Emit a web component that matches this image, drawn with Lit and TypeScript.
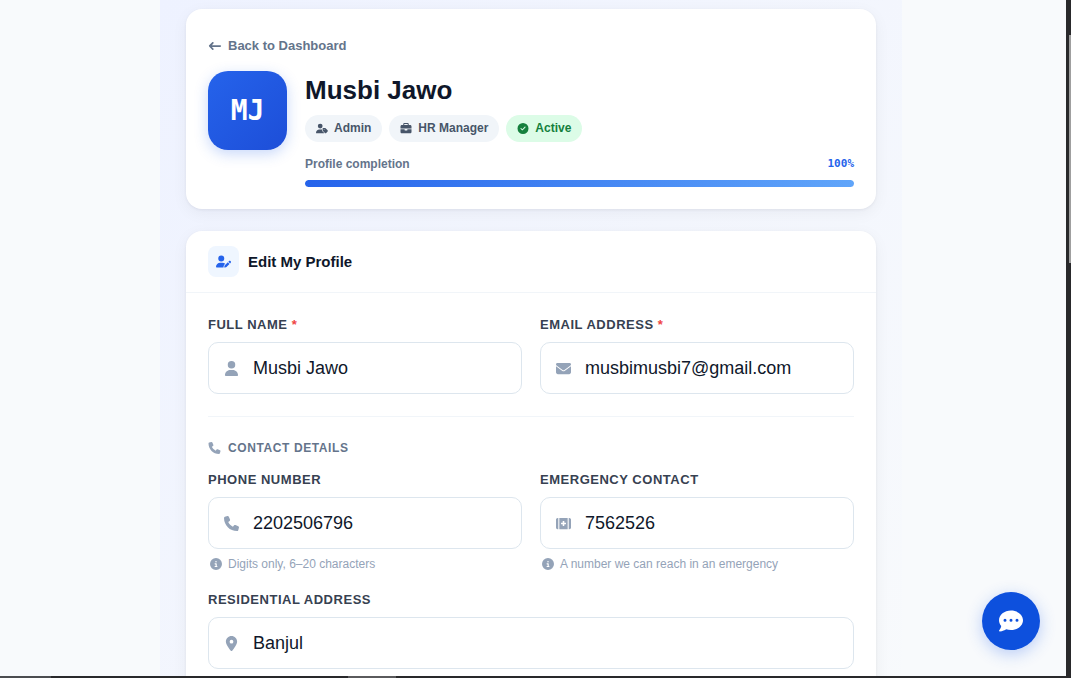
import { LitElement, html, css, svg } from "lit";
import { customElement, property } from "lit/decorators.js";

type Icon = { box: string; d: string };

const circle = "M256 512A256 256 0 1 0 256 0a256 256 0 1 0 0 512z";
const person = "M224 256A128 128 0 1 0 224 0a128 128 0 1 0 0 256zm-45.7 48C79.8 304 0 383.8 0 482.3C0 498.7 13.3 512 29.7 512";

const icons: Record<string, Icon> = {
  back: {
    box: "0 0 448 512",
    d: "M9 233c-12 12-12 33 0 45l112 112c12 12 33 12 45 0s12-33 0-45L109 288H416c18 0 32-14 32-32s-14-32-32-32H109L166 167c12-12 12-33 0-45s-33-12-45 0z",
  },
  user: {
    box: "0 0 448 512",
    d: person + "H418.3c16.4 0 29.7-13.3 29.7-29.7C448 383.8 368.2 304 269.7 304H178.3z",
  },
  userTag: {
    box: "0 0 640 512",
    d: person + "H418.3c10 0 18.8-4.9 24.2-12.5l-99.2-99.2c-14.9-14.9-23.3-35.1-23.3-56.1v-33c-15.9-4.7-32.8-7.2-50.3-7.2H178.3zM384 224c-17.7 0-32 14.3-32 32v82.7c0 17 6.7 33.3 18.7 45.3L478.1 491.3c18.7 18.7 49.1 18.7 67.9 0l73.4-73.4c18.7-18.7 18.7-49.1 0-67.9L512 242.7c-12-12-28.3-18.7-45.3-18.7H384zm24 80a24 24 0 1 1 48 0 24 24 0 1 1 -48 0z",
  },
  userPen: {
    box: "0 0 640 512",
    d: person + "H322.8c-3.1-8.8-3.7-18.4-1.4-27.8l15-60.1c2.8-11.3 8.6-21.5 16.8-29.7l40.3-40.3c-32.1-31-75.7-50.1-123.9-50.1H178.3zm435.5-68.3c-15.6-15.6-40.9-15.6-56.6 0l-29.4 29.4 71 71 29.4-29.4c15.6-15.6 15.6-40.9 0-56.6l-14.4-14.4zM375.9 417c-4.1 4.1-7 9.2-8.4 14.9l-15 60.1c-1.4 5.5 .2 11.2 4.2 15.2s9.7 5.6 15.2 4.2l60.1-15c5.6-1.4 10.8-4.3 14.9-8.4L576.1 358.7l-71-71L375.9 417z",
  },
  briefcase: {
    box: "0 0 512 512",
    d: "M184 48H328c4.4 0 8 3.6 8 8V96H176V56c0-4.4 3.6-8 8-8zm-56 8V96H64C28.7 96 0 124.7 0 160v96H192 320 512V160c0-35.3-28.7-64-64-64H384V56c0-30.9-25.1-56-56-56H184c-30.9 0-56 25.1-56 56zM512 288H320v32c0 17.7-14.3 32-32 32H224c-17.7 0-32-14.3-32-32V288H0V416c0 35.3 28.7 64 64 64H448c35.3 0 64-28.7 64-64V288z",
  },
  check: {
    box: "0 0 512 512",
    d: circle + "M369 209L241 337c-9.4 9.4-24.6 9.4-33.9 0l-64-64c-9.4-9.4-9.4-24.6 0-33.9s24.6-9.4 33.9 0l47 47L335 175c9.4-9.4 24.6-9.4 33.9 0s9.4 24.6 0 33.9z",
  },
  info: {
    box: "0 0 512 512",
    d: circle + "M216 336h24V272H216c-13.3 0-24-10.7-24-24s10.7-24 24-24h48c13.3 0 24 10.7 24 24v88h8c13.3 0 24 10.7 24 24s-10.7 24-24 24H216c-13.3 0-24-10.7-24-24s10.7-24 24-24zm40-208a32 32 0 1 1 0 64 32 32 0 1 1 0-64z",
  },
  envelope: {
    box: "0 0 512 512",
    d: "M48 64C21.5 64 0 85.5 0 112c0 15.1 7.1 29.3 19.2 38.4L236.8 313.6c11.4 8.5 27 8.5 38.4 0L492.8 150.4c12.1-9.1 19.2-23.3 19.2-38.4c0-26.5-21.5-48-48-48H48zM0 176V384c0 35.3 28.7 64 64 64H448c35.3 0 64-28.7 64-64V176L294.4 339.2c-22.8 17.1-54 17.1-76.8 0L0 176z",
  },
  phone: {
    box: "0 0 512 512",
    d: "M164.9 24.6c-7.7-18.6-28-28.5-47.4-23.2l-88 24C12.1 30.2 0 46 0 64C0 311.4 200.6 512 448 512c18 0 33.8-12.1 38.6-29.5l24-88c5.3-19.4-4.6-39.7-23.2-47.4l-96-40c-16.3-6.8-35.2-2.1-46.3 11.6L304.7 368C234.3 334.7 177.3 277.7 144 207.3L193.3 167c13.7-11.2 18.4-30 11.6-46.3l-40-96z",
  },
  medical: {
    box: "0 0 576 512",
    d: "M64 40h24v432H64c-35.3 0-64-28.7-64-64V104c0-35.3 28.7-64 64-64zM128 40H448V472H128zM512 40h-24v432h24c35.3 0 64-28.7 64-64V104c0-35.3-28.7-64-64-64zM256 176v48H208c-8.8 0-16 7.2-16 16v32c0 8.8 7.2 16 16 16h48v48c0 8.8 7.2 16 16 16h32c8.8 0 16-7.2 16-16V288h48c8.8 0 16-7.2 16-16V240c0-8.8-7.2-16-16-16H320V176c0-8.8-7.2-16-16-16H272c-8.8 0-16 7.2-16 16z",
  },
  pin: {
    box: "0 0 384 512",
    d: "M215.7 499.2C267 435 384 279.4 384 192C384 86 298 0 192 0S0 86 0 192c0 87.4 117 243 168.3 307.2c12.3 15.3 35.1 15.3 47.4 0zM192 128a64 64 0 1 1 0 128 64 64 0 1 1 0-128z",
  },
  chat: {
    box: "0 0 512 512",
    d: "M256 448c141.4 0 256-93.1 256-208S397.4 32 256 32S0 125.1 0 240c0 45.1 17.7 86.8 47.7 120.9c-1.9 24.5-11.4 46.3-21.4 62.9c-5.5 9.2-11.1 16.6-15.2 21.6c-2.1 2.5-3.7 4.4-4.9 5.7l-1.6 1.7c-4.6 4.6-5.9 11.4-3.4 17.4c2.5 6 8.3 9.9 14.8 9.9c28.7 0 57.6-8.9 81.6-19.3c22.9-10 42.4-21.9 54.3-30.6c31.8 11.5 67 17.9 104.1 17.9zM128 208a32 32 0 1 1 0 64 32 32 0 1 1 0-64zm128 0a32 32 0 1 1 0 64 32 32 0 1 1 0-64zm128 0a32 32 0 1 1 0 64 32 32 0 1 1 0-64z",
  },
};

@customElement("ui-icon")
class UiIcon extends LitElement {
  @property() name = "user";

  static styles = css`
    :host {
      display: inline-flex;
      flex: none;
      width: 1em;
      height: 1em;
    }
    .glyph {
      width: 100%;
      height: 100%;
      fill: currentColor;
      fill-rule: evenodd;
    }
  `;

  render() {
    const icon = icons[this.name];
    return html`<svg class="glyph" viewBox=${icon.box} aria-hidden="true">
      ${svg`<path d=${icon.d}></path>`}
    </svg>`;
  }
}

@customElement("profile-field")
class ProfileField extends LitElement {
  @property() label = "";
  @property() icon = "user";
  @property() type = "text";
  @property() value = "";
  @property() hint = "";
  @property({ type: Boolean }) required = false;

  static styles = css`
    :host {
      display: block;
      min-width: 0;
    }
    .label {
      display: block;
      margin-bottom: 8px;
      font-size: 13px;
      line-height: 18px;
      font-weight: 700;
      letter-spacing: 0.04em;
      text-transform: uppercase;
      color: #374151;
    }
    .star {
      color: #ef4444;
    }
    .box {
      display: flex;
      align-items: center;
      gap: 14px;
      height: 52px;
      box-sizing: border-box;
      padding: 0 15px;
      border: 1px solid #dde6ee;
      border-radius: 10px;
      background: #fff;
    }
    .mark {
      font-size: 15px;
      color: #94a3b8;
    }
    .input {
      flex: 1;
      min-width: 0;
      height: 100%;
      padding: 0;
      border: 0;
      outline: 0;
      background: none;
      font: 18px "Liberation Sans", Arial, sans-serif;
      color: #0f172a;
    }
    .hint {
      display: flex;
      align-items: center;
      gap: 6px;
      margin: 7px 0 0;
      padding-left: 2px;
      font-size: 12px;
      line-height: 16px;
      color: #94a3b8;
    }
  `;

  render() {
    return html`
      <label class="label" for="field"
        >${this.label}${this.required ? html` <span class="star">*</span>` : ""}</label
      >
      <div class="box">
        <ui-icon class="mark" name=${this.icon}></ui-icon>
        <input
          class="input"
          id="field"
          type=${this.type}
          .value=${this.value}
          ?required=${this.required}
        />
      </div>
      ${this.hint
        ? html`<p class="hint"><ui-icon name="info"></ui-icon>${this.hint}</p>`
        : ""}
    `;
  }
}

@customElement("app-root")
class AppRoot extends LitElement {
  @property({ type: Number }) completion = 100;

  static styles = css`
    :host {
      display: grid;
      grid-template: minmax(0, 1fr) 2px / minmax(0, 1fr) 5px;
      height: 100vh;
      overflow: hidden;
      position: relative;
      background: #f8fafc;
      font-family: "Liberation Sans", Arial, sans-serif;
      color: #0f172a;
    }
    .view {
      overflow: hidden;
    }
    .page {
      display: flex;
      flex-direction: column;
      gap: 22px;
      margin: 0 164px 0 160px;
      padding: 9px 26px 26px;
      background: linear-gradient(135deg, #eef2ff 0%, #f8fafc 100%);
    }
    .card {
      border-radius: 16px;
      background: #fff;
      box-shadow: 0 1px 3px rgba(15, 23, 42, 0.06), 0 4px 16px rgba(15, 23, 42, 0.05);
    }
    .summary {
      padding: 22px;
    }
    .back {
      display: flex;
      width: fit-content;
      align-items: center;
      gap: 6px;
      margin-bottom: 10px;
      font-size: 13px;
      line-height: 30px;
      font-weight: 700;
      color: #64748b;
      text-decoration: none;
    }
    .back ui-icon {
      font-size: 14px;
    }
    .identity {
      display: flex;
      gap: 18px;
    }
    .avatar {
      display: grid;
      place-items: center;
      flex: none;
      width: 79px;
      height: 79px;
      border-radius: 20px;
      background: linear-gradient(135deg, #2563eb, #1d4ed8);
      box-shadow: 0 4px 14px rgba(37, 99, 235, 0.25);
      font: 700 28px "DejaVu Sans Mono", monospace;
      color: #fff;
    }
    .details {
      flex: 1;
      min-width: 0;
    }
    .name {
      margin: 0 0 6px;
      font-size: 26px;
      line-height: 38px;
      font-weight: 700;
    }
    .chips {
      display: flex;
      flex-wrap: wrap;
      gap: 7px;
      margin-bottom: 14px;
    }
    .chip {
      display: flex;
      align-items: center;
      gap: 6px;
      padding: 0 11px;
      border-radius: 14px;
      background: #f1f5f9;
      font-size: 12px;
      line-height: 27px;
      font-weight: 700;
      color: #475569;
    }
    .chip ui-icon {
      width: 12px;
      height: 11px;
    }
    .chip-active {
      background: #dcfce7;
      color: #15803d;
    }
    .progress-head {
      display: flex;
      justify-content: space-between;
      margin-bottom: 8px;
      font-size: 12px;
      line-height: 16px;
      font-weight: 700;
      color: #64748b;
    }
    .percent {
      font-family: "DejaVu Sans Mono", monospace;
      font-size: 11px;
      color: #2563eb;
    }
    .track {
      height: 7px;
      border-radius: 4px;
      overflow: hidden;
      background: #e2e8f0;
    }
    .fill {
      height: 100%;
      border-radius: 4px;
      background: linear-gradient(90deg, #2563eb, #60a5fa);
    }
    .form-head {
      display: flex;
      align-items: center;
      gap: 9px;
      padding: 15px 22px;
      border-bottom: 1px solid #f1f5f9;
    }
    .badge {
      display: grid;
      place-items: center;
      width: 31px;
      height: 31px;
      border-radius: 8px;
      background: #eff6ff;
      font-size: 15px;
      color: #2563eb;
    }
    .title {
      margin: 0;
      font-size: 15px;
      line-height: 20px;
      font-weight: 700;
    }
    .form {
      padding: 23px 22px;
    }
    .grid {
      display: grid;
      grid-template-columns: repeat(2, minmax(0, 1fr));
      gap: 19px 18px;
    }
    .wide {
      grid-column: 1 / -1;
    }
    .section {
      display: flex;
      align-items: center;
      gap: 7px;
      margin: 22px 0 15px;
      padding-top: 23px;
      border-top: 1px solid #f1f5f9;
      font-size: 12px;
      line-height: 16px;
      font-weight: 700;
      letter-spacing: 0.05em;
      text-transform: uppercase;
      color: #64748b;
    }
    .section ui-icon {
      width: 13px;
      color: #94a3b8;
    }
    .chat {
      position: absolute;
      right: 31px;
      bottom: 28px;
      display: grid;
      place-items: center;
      width: 58px;
      height: 58px;
      padding: 0;
      border: 0;
      border-radius: 50%;
      background: #0d50dd;
      box-shadow: 0 4px 16px rgba(37, 99, 235, 0.3);
      font-size: 24px;
      color: #fff;
    }
    .rail {
      display: flex;
      flex-direction: column;
      align-items: flex-end;
      padding-top: 35px;
      background: #29292b;
    }
    .thumb {
      width: 2px;
      height: 35.5%;
      background: #9f9f9f;
    }
    .strip {
      grid-column: 1 / -1;
      background: linear-gradient(
        90deg,
        #4b4d50 51px,
        #29292b 51px 348px,
        #5a5a5c 348px 396px,
        #29292b 396px
      );
    }
  `;

  render() {
    return html`
      <div class="view">
        <main class="page">
          <section class="card summary">
            <a class="back" href="#dashboard"><ui-icon name="back"></ui-icon>Back to Dashboard</a>
            <div class="identity">
              <div class="avatar">MJ</div>
              <div class="details">
                <h1 class="name">Musbi Jawo</h1>
                <div class="chips">
                  <span class="chip"><ui-icon name="userTag"></ui-icon>Admin</span>
                  <span class="chip"><ui-icon name="briefcase"></ui-icon>HR Manager</span>
                  <span class="chip chip-active"><ui-icon name="check"></ui-icon>Active</span>
                </div>
                <div class="progress-head">
                  <span>Profile completion</span>
                  <span class="percent">${this.completion}%</span>
                </div>
                <div class="track">
                  <div class="fill" style="width:${this.completion}%"></div>
                </div>
              </div>
            </div>
          </section>

          <section class="card">
            <header class="form-head">
              <span class="badge"><ui-icon name="userPen"></ui-icon></span>
              <h2 class="title">Edit My Profile</h2>
            </header>
            <form class="form">
              <div class="grid">
                <profile-field label="Full Name" icon="user" value="Musbi Jawo" required></profile-field>
                <profile-field
                  label="Email Address"
                  icon="envelope"
                  type="email"
                  value="musbimusbi7@gmail.com"
                  required
                ></profile-field>
              </div>
              <h3 class="section"><ui-icon name="phone"></ui-icon>Contact Details</h3>
              <div class="grid">
                <profile-field
                  label="Phone Number"
                  icon="phone"
                  type="tel"
                  value="2202506796"
                  hint="Digits only, 6–20 characters"
                ></profile-field>
                <profile-field
                  label="Emergency Contact"
                  icon="medical"
                  type="tel"
                  value="7562526"
                  hint="A number we can reach in an emergency"
                ></profile-field>
                <profile-field
                  class="wide"
                  label="Residential Address"
                  icon="pin"
                  value="Banjul"
                ></profile-field>
              </div>
            </form>
          </section>
        </main>
      </div>
      <div class="rail"><div class="thumb"></div></div>
      <div class="strip"></div>
      <button class="chat" type="button" aria-label="Open chat"><ui-icon name="chat"></ui-icon></button>
    `;
  }
}
